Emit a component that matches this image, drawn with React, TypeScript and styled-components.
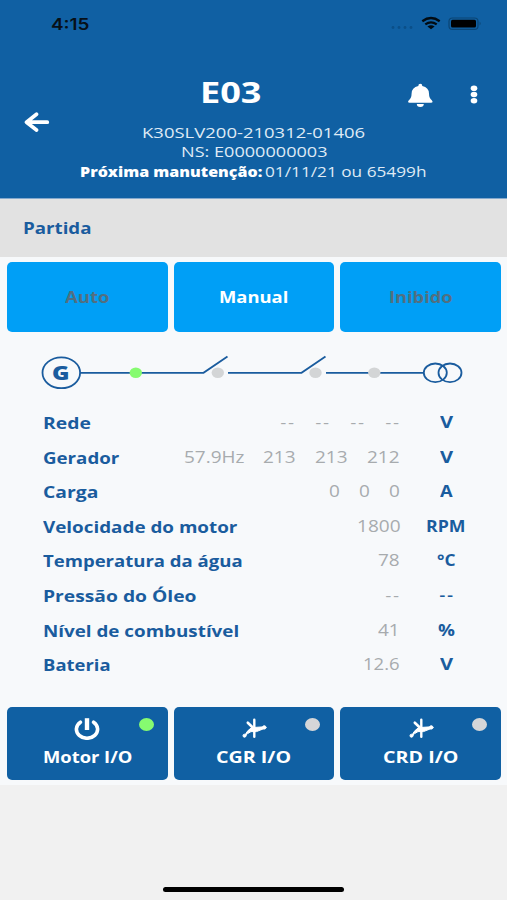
import React, { useLayoutEffect, useRef, useState } from "react";
import styled, { createGlobalStyle } from "styled-components";

const navy = "#1060a3";
const ink = "#1a5c9e";

const Global = createGlobalStyle`
  * { box-sizing: border-box; }
  body { margin: 0; background: #f1f1f1; font-family: "Open Sans", "Noto Sans", sans-serif; }
`;

const FitBox = styled.span<{ $w: number }>`
  display: inline-block;
  width: ${(p) => p.$w}px;
  white-space: nowrap;
  text-align: left;
`;
const FitInner = styled.span`
  display: inline-block;
  transform-origin: 0 50%;
`;

/* Wide-set text: stretches its glyphs to fill the given width. */
function Wide({ w, children }: { w: number; children: React.ReactNode }) {
  const ref = useRef<HTMLSpanElement>(null);
  const [scale, setScale] = useState(1);
  useLayoutEffect(() => {
    if (ref.current) setScale(w / ref.current.offsetWidth);
  }, [w]);
  return (
    <FitBox $w={w}>
      <FitInner ref={ref} style={{ transform: `scaleX(${scale})` }}>{children}</FitInner>
    </FitBox>
  );
}

const Screen = styled.main`
  display: flex;
  flex-direction: column;
  width: 507px;
  height: 900px;
  overflow: hidden;
  background: #f1f1f1;
`;
const Header = styled.header`
  height: 199px;
  background: ${navy};
  border-bottom: 1px solid #84a9cd;
  color: #fff;
`;
const StatusBar = styled.div`
  display: flex;
  justify-content: space-between;
  height: 48px;
  padding: 13px 25px 0 51px;
  color: #071018;
  font: 600 16px/22px Inter, sans-serif;
`;
const HeaderRow = styled.div`
  display: grid;
  grid-template-columns: 100px 307px 100px;
  height: 150px;
`;
const BackButton = styled.div`
  padding: 63px 0 0 24px;
`;
const Heading = styled.div`
  display: flex;
  flex-direction: column;
  align-items: center;
  padding-top: 24px;
`;
const Title = styled.h1`
  margin: 0 47px 10px 0;
  font: 700 29px/40px "Open Sans", sans-serif;
`;
const TitleLine = styled.div`
  height: 19.3px;
  font-size: 15px;
  line-height: 20px;
  color: #dfeaf5;
  white-space: nowrap;
  b { color: #fff; font-weight: 800; font-size: 14px; }
`;
const Actions = styled.div`
  display: flex;
  justify-content: flex-end;
  gap: 37px;
  padding: 35px 29px 0 0;
  svg { flex: none; }
`;
const SectionBar = styled.div`
  height: 58px;
  padding: 17px 23px;
  background: #e2e2e2;
  color: ${ink};
  font: 700 16.5px/24px "Open Sans", sans-serif;
`;
const Panel = styled.section`
  height: 528px;
  padding: 5px 6px 0 7px;
  background: #f7f9fb;
`;
const ButtonRow = styled.div`
  display: grid;
  grid-template-columns: repeat(3, 1fr);
  gap: 6px;
`;
const ModeButton = styled.div<{ $active?: boolean }>`
  display: flex;
  align-items: center;
  justify-content: center;
  height: 70px;
  border-radius: 5px;
  background: #009ff6;
  color: ${(p) => (p.$active ? "#fff" : "#526f80")};
  font: 700 16.5px/24px "Open Sans", sans-serif;
`;
const Diagram = styled.svg`
  display: block;
  margin: 21px 0 0 33px;
`;
const Readings = styled.div`
  height: 314px;
  padding: 17px 9px 0 36px;
`;
const Reading = styled.div`
  display: grid;
  grid-template-columns: 1fr auto 92px;
  height: 34.6px;
  line-height: 24px;
`;
const Name = styled.div`
  color: ${ink};
  font-size: 16.5px;
  font-weight: 700;
  padding-top: 1px;
`;
const Values = styled.div`
  display: flex;
  color: #a7abae;
  font-size: 15.5px;
`;
const Value = styled.div<{ $gap: number }>`
  margin-left: ${(p) => p.$gap}px;
`;
const Unit = styled.div`
  color: ${ink};
  text-align: center;
  font-size: 15.5px;
  font-weight: 700;
`;
const Dash = styled.span`
  font-family: Lato, sans-serif;
  letter-spacing: 1px;
  margin-right: -1px;
`;
const IoButton = styled.div`
  position: relative;
  display: flex;
  flex-direction: column;
  align-items: center;
  height: 73px;
  padding-top: 9px;
  border-radius: 5px;
  background: ${navy};
  color: #fff;
  font: 700 16.5px/24px "Open Sans", sans-serif;
  svg { display: block; margin-bottom: 5px; }
`;
const Lamp = styled.i<{ $on?: boolean }>`
  position: absolute;
  top: 11px;
  right: 14px;
  width: 15px;
  height: 13px;
  border-radius: 50%;
  background: ${(p) => (p.$on ? "#86fb70" : "#d5d6d8")};
`;
const Footer = styled.footer`
  display: flex;
  justify-content: center;
  padding-top: 102px;
`;
const HomeIndicator = styled.div`
  width: 181px;
  height: 5px;
  border-radius: 3px;
  background: #000;
`;

const StatusIcons = () => (
  <svg width="92" height="22" viewBox="390 13 92 22">
    <g fill="#0b4f88">
      <circle cx="393" cy="27.5" r="1.4" /><circle cx="399" cy="27.5" r="1.4" />
      <circle cx="405" cy="27.5" r="1.4" /><circle cx="411" cy="27.5" r="1.4" />
    </g>
    <g fill="none" stroke="#020b12" strokeWidth="2.3">
      <path d="M422.3 21.2Q431 14.8 439.7 21.2M425.3 24.4Q431 20.3 436.7 24.4" />
    </g>
    <path d="M427.4 26.4Q431 24 434.6 26.4L431 29.2Z" fill="#020b12" />
    <rect x="449" y="18" width="29" height="11.4" rx="3.5" fill="none" stroke="#0b4574" strokeWidth="1.2" />
    <rect x="451" y="19.7" width="25" height="7.8" rx="1.5" fill="#000" />
    <path d="M479.6 21.5q2 2 0 4z" fill="#0b4574" />
  </svg>
);
const Arrow = () => (
  <svg width="26" height="22" viewBox="24 111 26 22" fill="none" stroke="#fff" strokeWidth="3.7" strokeLinecap="round" strokeLinejoin="round">
    <path d="M47.3 122.2H27M36.5 114.2L26.5 122.2L36.5 130" />
  </svg>
);
const Bell = () => (
  <svg width="26" height="25" viewBox="407 83 26 25" fill="#fff">
    <path d="M418.3 86Q418.3 83.8 420.3 83.8Q422.3 83.8 422.3 86Q429 87.7 429 93.5Q429 98 431.8 100.2Q433.7 102.7 431 102.7H409.6Q407 102.7 408.8 100.2Q411.6 98 411.6 93.5Q411.6 87.7 418.3 86Z" />
    <path d="M416.8 104H423.8Q423.8 107 420.3 107Q416.8 107 416.8 104Z" />
  </svg>
);
const Dots = () => (
  <svg width="8" height="25" viewBox="470 83 8 25" fill="#fff">
    <ellipse cx="474" cy="88.3" rx="3.3" ry="2.8" />
    <ellipse cx="474" cy="94.5" rx="3.3" ry="2.8" />
    <ellipse cx="474" cy="100.7" rx="3.3" ry="2.8" />
  </svg>
);
const Power = () => (
  <svg width="26" height="24" viewBox="74 716 26 24" fill="none" stroke="#fff" strokeLinecap="round">
    <path d="M80.4 722.2A10.6 9 0 1 0 93.6 722.2" strokeWidth="3.6" />
    <path d="M87 718.2V730" strokeWidth="4.4" strokeLinecap="butt" />
  </svg>
);
const Breaker = () => (
  <svg width="26" height="24" viewBox="407 716 26 24" fill="none" stroke="#fff" strokeLinecap="round">
    <path d="M413.8 722.7L418.5 727.3" strokeWidth="2.6" />
    <path d="M410.6 735.8Q412.5 731 417.5 727.6L430.5 726.8L431 728.2L422.5 731.6L417 731.6Q413.5 733.5 410.6 735.8Z" fill="#fff" strokeWidth="1" strokeLinejoin="round" />
    <path d="M420.3 719.8V736.8" strokeWidth="2.4" />
    <circle cx="410.5" cy="735.7" r="1.5" fill="#fff" strokeWidth="1" />
    <circle cx="430.3" cy="727.4" r="1.7" fill="#fff" strokeWidth="1" />
  </svg>
);
const Circuit = () => (
  <Diagram width="426" height="40" viewBox="40 353 426 40" fill="none" stroke={ink} strokeWidth="1.8">
    <ellipse cx="61.3" cy="372.8" rx="18.8" ry="15.4" />
    <path d="M80 372.8H203.5L227.5 356.5M228 372.8H301.5L325.5 356.5M326 372.8H424" />
    <ellipse cx="435.3" cy="372.8" rx="11.5" ry="9.3" />
    <ellipse cx="450" cy="372.8" rx="11.5" ry="9.3" />
    <g stroke="none" fill="#d3d5d6">
      <ellipse cx="135.8" cy="372.8" rx="6.2" ry="5.2" fill="#86fb70" />
      <ellipse cx="217.8" cy="372.8" rx="6.2" ry="5.2" />
      <ellipse cx="315.5" cy="372.8" rx="6.2" ry="5.2" />
      <ellipse cx="374.3" cy="372.8" rx="6.2" ry="5.2" />
    </g>
    <text x="52" y="379.8" textLength="17.5" lengthAdjust="spacingAndGlyphs" fill={ink} stroke="none" fontFamily="Open Sans" fontWeight="800" fontSize="19.5">G</text>
  </Diagram>
);

type Cell = [text: string, width: number, gap: number];
const dash = (gap: number): Cell => ["--", 15, gap];
const readings: { name: string; w: number; values: Cell[]; unit: string; uw: number }[] = [
  { name: "Rede", w: 48, values: [dash(0), dash(20), dash(20), dash(20)], unit: "V", uw: 13 },
  { name: "Gerador", w: 76, values: [["57.9Hz", 60, 0], ["213", 33, 19], ["213", 33, 19], ["212", 33, 19]], unit: "V", uw: 13 },
  { name: "Carga", w: 55, values: [["0", 11, 0], ["0", 11, 19], ["0", 11, 19]], unit: "A", uw: 13 },
  { name: "Velocidade do motor", w: 194, values: [["1800", 43, 0]], unit: "RPM", uw: 40 },
  { name: "Temperatura da água", w: 200, values: [["78", 22, 0]], unit: "°C", uw: 19 },
  { name: "Pressão do Óleo", w: 154, values: [dash(0)], unit: "--", uw: 15 },
  { name: "Nível de combustível", w: 196, values: [["41", 22, 0]], unit: "%", uw: 17 },
  { name: "Bateria", w: 67, values: [["12.6", 37, 0]], unit: "V", uw: 13 },
];
const reading = (text: string) => (text === "--" ? <Dash>{text}</Dash> : text);

export default function App() {
  return (
    <Screen>
      <Global />
      <Header>
        <StatusBar><Wide w={39}>4:15</Wide><StatusIcons /></StatusBar>
        <HeaderRow>
          <BackButton><Arrow /></BackButton>
          <Heading>
            <Title><Wide w={61}>E03</Wide></Title>
            <TitleLine><Wide w={223}>K30SLV200-210312-01406</Wide></TitleLine>
            <TitleLine><Wide w={146}>NS: E0000000003</Wide></TitleLine>
            <TitleLine><Wide w={182}><b>Próxima manutenção:</b></Wide>&nbsp;<Wide w={162}>01/11/21 ou 65499h</Wide></TitleLine>
          </Heading>
          <Actions><Bell /><Dots /></Actions>
        </HeaderRow>
      </Header>
      <SectionBar><Wide w={68}>Partida</Wide></SectionBar>
      <Panel>
        <ButtonRow>
          <ModeButton><Wide w={45}>Auto</Wide></ModeButton>
          <ModeButton $active><Wide w={69}>Manual</Wide></ModeButton>
          <ModeButton><Wide w={63}>Inibido</Wide></ModeButton>
        </ButtonRow>
        <Circuit />
        <Readings>
          {readings.map((r) => (
            <Reading key={r.name}>
              <Name><Wide w={r.w}>{r.name}</Wide></Name>
              <Values>
                {r.values.map(([text, width, gap], i) => (
                  <Value key={i} $gap={gap}><Wide w={width}>{reading(text)}</Wide></Value>
                ))}
              </Values>
              <Unit><Wide w={r.uw}>{reading(r.unit)}</Wide></Unit>
            </Reading>
          ))}
        </Readings>
        <ButtonRow>
          <IoButton><Power /><Wide w={89}>Motor I/O</Wide><Lamp $on /></IoButton>
          <IoButton><Breaker /><Wide w={75}>CGR I/O</Wide><Lamp /></IoButton>
          <IoButton><Breaker /><Wide w={75}>CRD I/O</Wide><Lamp /></IoButton>
        </ButtonRow>
      </Panel>
      <Footer><HomeIndicator /></Footer>
    </Screen>
  );
}
